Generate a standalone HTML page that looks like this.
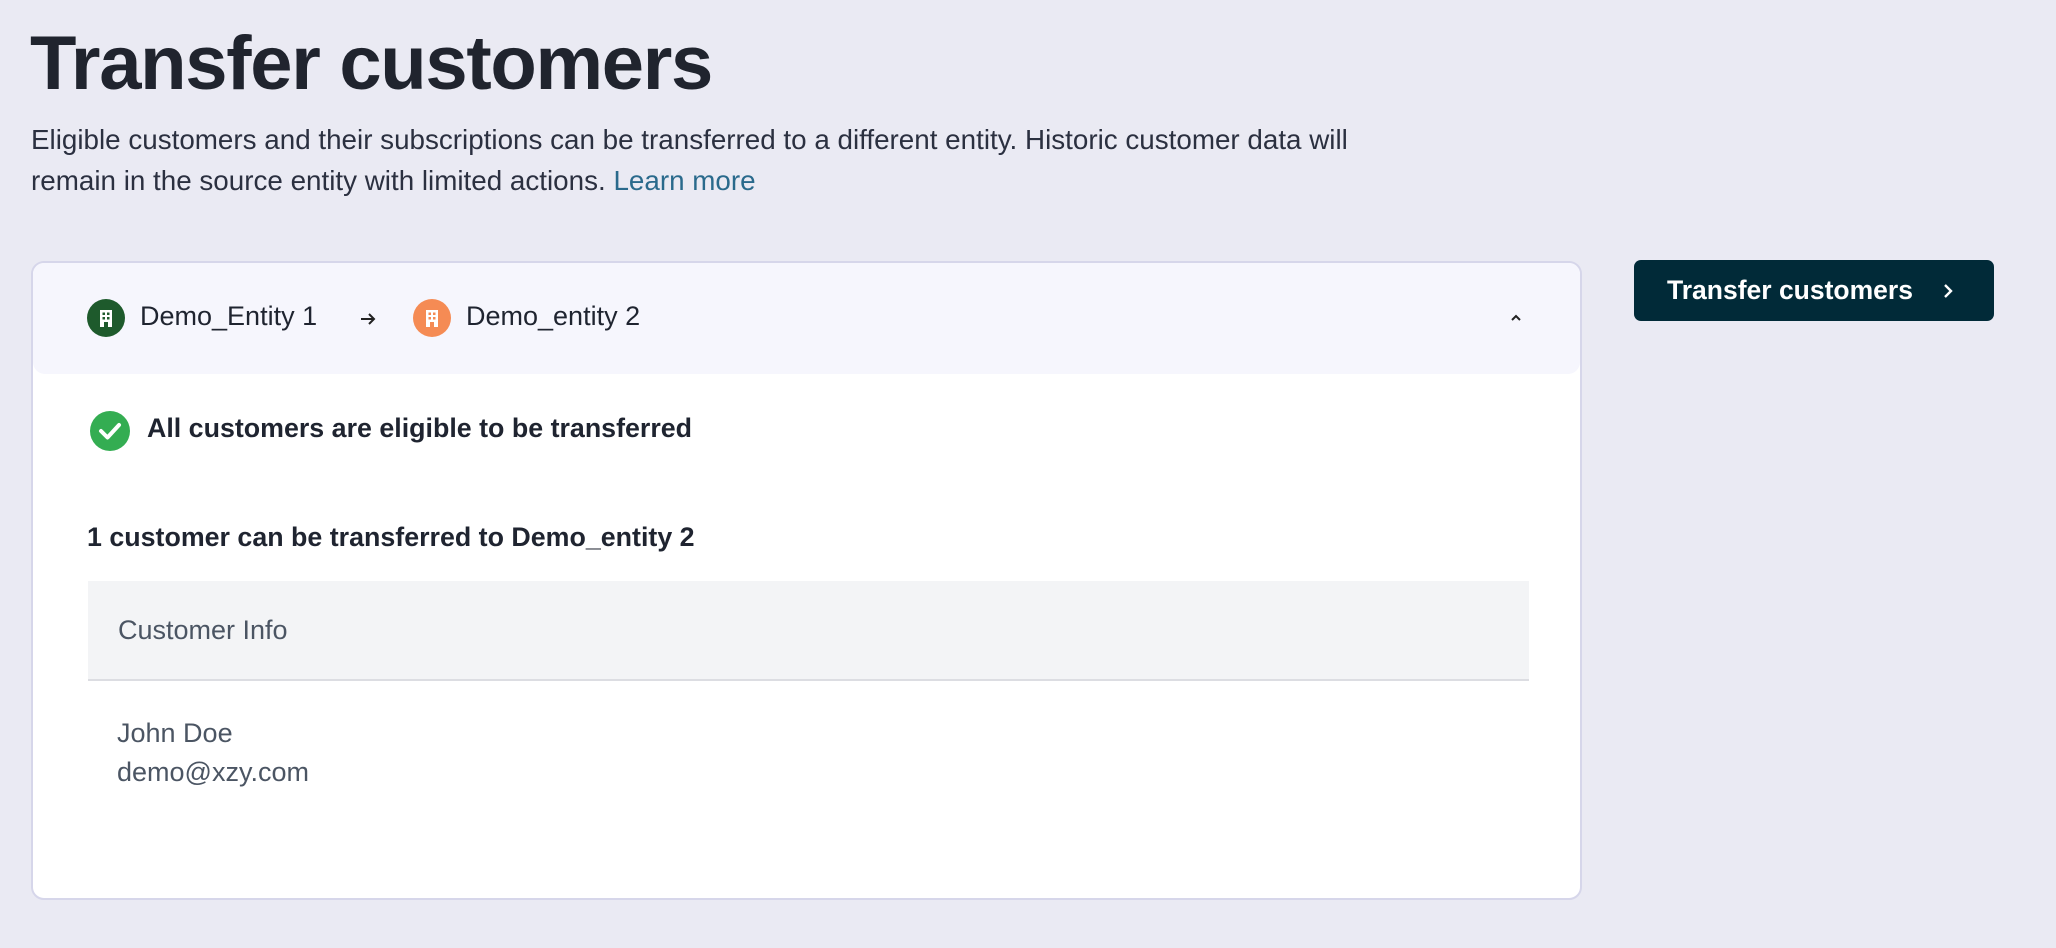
<!DOCTYPE html>
<html><head><meta charset="utf-8"><style>
*{margin:0;padding:0;box-sizing:border-box}
body{width:2056px;height:948px;background:#eaeaf3;font-family:"Liberation Sans",sans-serif;color:#1f2430;position:relative;overflow:hidden}
.abs{position:absolute;white-space:nowrap}
h1{position:absolute;left:30px;top:20px;font-size:76px;font-weight:700;letter-spacing:-1.3px;color:#20242e}
.desc{position:absolute;left:31px;top:119px;font-size:27.8px;line-height:41px;color:#2b3040}
.desc a{color:#2a6a8c;text-decoration:none}
.card{position:absolute;left:31px;top:261px;width:1551px;height:639px;background:#fff;border:2px solid #d6d6ea;border-radius:13px;overflow:hidden}
.hdr{position:absolute;left:0;top:0;right:0;height:111px;background:#f6f6fd;border-radius:0 0 12px 12px}
.ic{position:absolute;width:38px;height:38px;border-radius:50%}
.btn{position:absolute;left:1634px;top:260px;width:360px;height:61px;background:#012a38;border-radius:7px;color:#fff;font-size:26.5px;font-weight:700}
.th{position:absolute;left:55px;top:318px;width:1441px;height:100px;background:#f3f4f6;border-bottom:2px solid #dcdde2}
</style></head><body>
<h1>Transfer customers</h1>
<div class="desc">Eligible customers and their subscriptions can be transferred to a different entity. Historic customer data will<br>remain in the source entity with limited actions. <a>Learn more</a></div>
<div class="card">
 <div class="hdr">
  <div class="ic" style="left:54px;top:36px;background:#1e5a2c"><svg width="38" height="38" viewBox="0 0 38 38"><rect x="13" y="11" width="12" height="17" fill="#fff"/><rect x="15.5" y="13.5" width="2.5" height="2.5" fill="#1e5a2c"/><rect x="20" y="13.5" width="2.5" height="2.5" fill="#1e5a2c"/><rect x="15.5" y="18" width="2.5" height="2.5" fill="#1e5a2c"/><rect x="20" y="18" width="2.5" height="2.5" fill="#1e5a2c"/><rect x="17" y="23" width="4" height="5" fill="#1e5a2c"/></svg></div>
  <div class="abs" style="left:107px;top:38px;font-size:27px">Demo_Entity 1</div>
  <svg class="abs" style="left:326px;top:48px" width="18" height="16" viewBox="0 0 18 16"><path d="M2 8 H15 M10 3 L15 8 L10 13" stroke="#222" stroke-width="2" fill="none"/></svg>
  <div class="ic" style="left:380px;top:36px;background:#f58b54"><svg width="38" height="38" viewBox="0 0 38 38"><rect x="13" y="11" width="12" height="17" fill="#fff"/><rect x="15.5" y="13.5" width="2.5" height="2.5" fill="#f58b54"/><rect x="20" y="13.5" width="2.5" height="2.5" fill="#f58b54"/><rect x="15.5" y="18" width="2.5" height="2.5" fill="#f58b54"/><rect x="20" y="18" width="2.5" height="2.5" fill="#f58b54"/><rect x="17" y="23" width="4" height="5" fill="#f58b54"/></svg></div>
  <div class="abs" style="left:433px;top:38px;font-size:27px">Demo_entity 2</div>
  <svg class="abs" style="left:1476px;top:50px" width="14" height="10" viewBox="0 0 14 10"><path d="M3 7 L7 3 L11 7" stroke="#222" stroke-width="2" fill="none"/></svg>
 </div>
 <svg class="abs" style="left:57px;top:148px" width="40" height="40" viewBox="0 0 40 40"><circle cx="20" cy="20" r="20" fill="#34ad52"/><path d="M11 20 L17.5 26.5 L29 14" stroke="#fff" stroke-width="4" fill="none" stroke-linecap="round" stroke-linejoin="round"/></svg>
 <div class="abs" style="left:114px;top:150px;font-size:26.8px;font-weight:700">All customers are eligible to be transferred</div>
 <div class="abs" style="left:54px;top:259px;font-size:26.8px;font-weight:700">1 customer can be transferred to Demo_entity 2</div>
 <div class="th"><div class="abs" style="left:30px;top:34px;font-size:27px;color:#4b5563">Customer Info</div></div>
 <div class="abs" style="left:84px;top:451px;font-size:27px;line-height:39px;color:#4b5563">John Doe<br>demo@xzy.com</div>
</div>
<div class="btn"><span class="abs" style="left:33px;top:15px">Transfer customers</span><svg class="abs" style="left:308px;top:22px" width="12" height="18" viewBox="0 0 12 18"><path d="M3 3 L9 9 L3 15" stroke="#fff" stroke-width="2.4" fill="none"/></svg></div>
</body></html>
